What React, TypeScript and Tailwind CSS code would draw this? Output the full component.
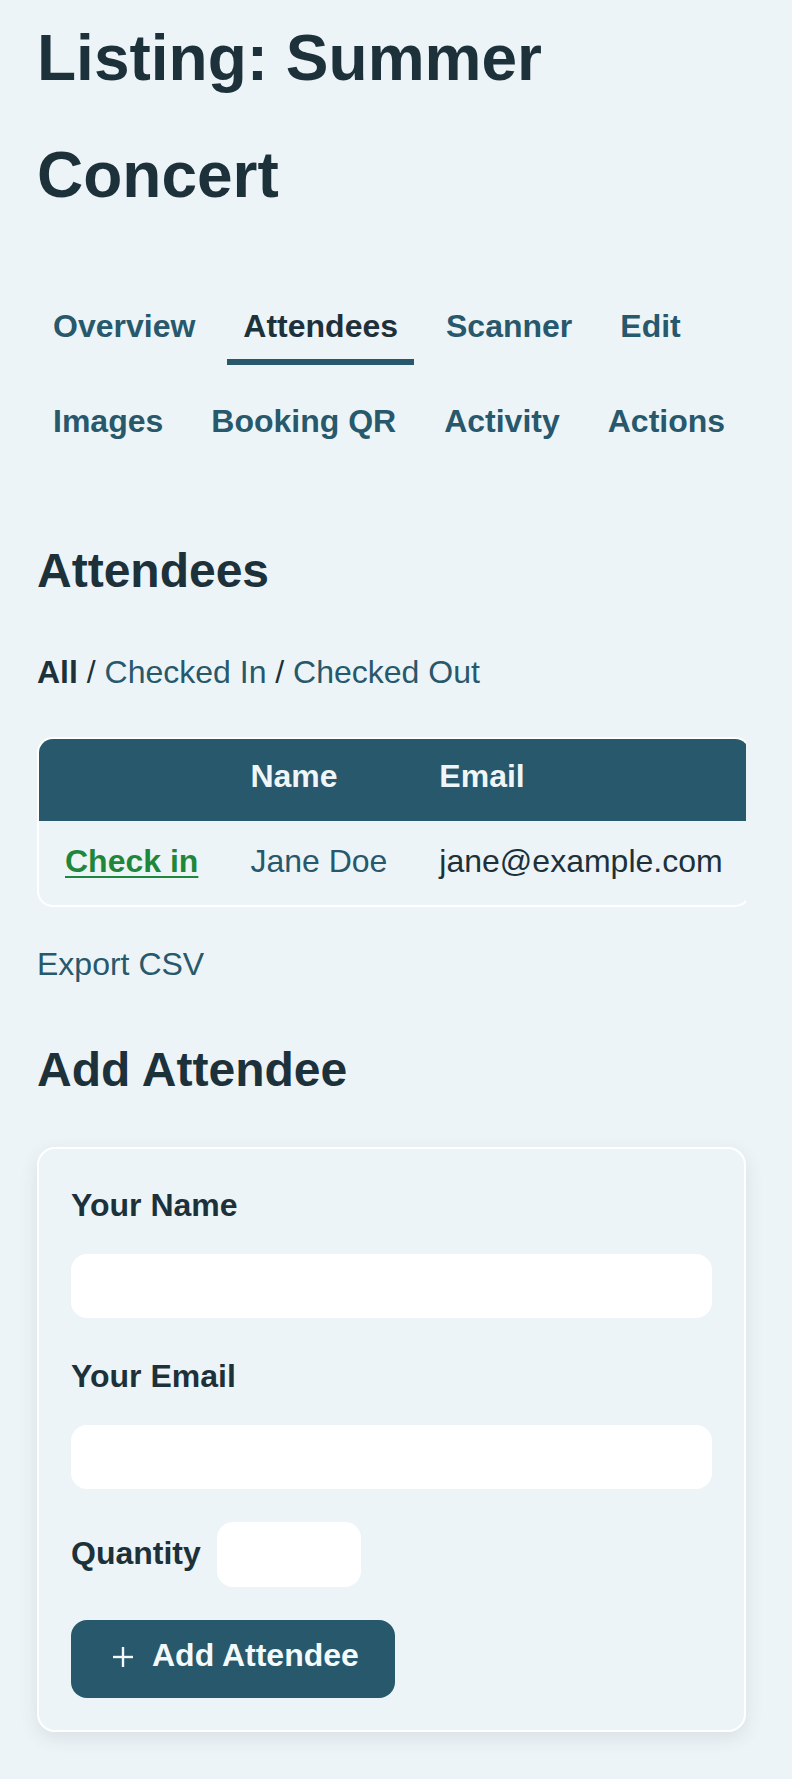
import React from "react";

const tabs = [
    { label: "Overview", active: false },
    { label: "Attendees", active: true },
    { label: "Scanner", active: false },
    { label: "Edit", active: false },
    { label: "Images", active: false },
    { label: "Booking QR", active: false },
    { label: "Activity", active: false },
    { label: "Actions", active: false },
];

const PlusIcon: React.FC = () => (
    <svg width="22" height="22" viewBox="0 0 22 22" className="shrink-0 mt-[15px]">
        <line x1="11" y1="1" x2="11" y2="21" stroke="#f4f9fb" strokeWidth="2.4" />
        <line x1="1" y1="11" x2="21" y2="11" stroke="#f4f9fb" strokeWidth="2.4" />
    </svg>
);

export default function App() {
    return (
        <div
            className="min-h-[1779px] bg-[#edf4f7] pl-[37px] text-[#1d313b] text-[32px] leading-[48px]"
            style={{ fontFamily: '"Liberation Sans", Arial, sans-serif' }}
        >
            <div className="w-[709px]">
                <h1 className="text-[64px] leading-[117px] font-bold">Listing: Summer Concert</h1>

                <nav className="mt-[59px] flex flex-wrap gap-x-[16px] gap-y-[23px]">
                    {tabs.map((t) => (
                        <a
                            key={t.label}
                            className={`px-[16px] pt-[9px] pb-[9px] border-b-[6px] font-bold ${
                                t.active ? "border-[#27586c] text-[#1d313b]" : "border-transparent text-[#27586c]"
                            }`}
                        >
                            {t.label}
                        </a>
                    ))}
                </nav>

                <h2 className="mt-[82px] text-[48px] leading-[58px] font-bold">Attendees</h2>

                <p className="mt-[48px]">
                    <span className="font-bold">All</span> /{" "}
                    <a className="text-[#27586c]">Checked In</a> /{" "}
                    <a className="text-[#27586c]">Checked Out</a>
                </p>

                <div className="mt-[41px] w-[709px] overflow-hidden">
                    <div className="w-max border-2 border-white rounded-[16px] overflow-hidden">
                        <table className="border-collapse">
                            <thead>
                                <tr className="bg-[#27586c] text-[#eef6f9]">
                                    <th className="px-[26px] pt-[13px] pb-[21px] text-left font-bold"></th>
                                    <th className="px-[26px] pt-[13px] pb-[21px] text-left font-bold">Name</th>
                                    <th className="px-[26px] pt-[13px] pb-[21px] text-left font-bold">Email</th>
                                </tr>
                            </thead>
                            <tbody>
                                <tr>
                                    <td className="px-[26px] pt-[16px] pb-[20px]">
                                        <a className="font-bold text-[#1f873b] underline underline-offset-[4px] decoration-2">
                                            Check in
                                        </a>
                                    </td>
                                    <td className="px-[26px] pt-[16px] pb-[20px] text-[#27586c]">Jane Doe</td>
                                    <td className="px-[26px] pt-[16px] pb-[20px]">jane@example.com</td>
                                </tr>
                            </tbody>
                        </table>
                    </div>
                </div>

                <a className="block mt-[33px] text-[#27586c]">Export CSV</a>

                <h2 className="mt-[53px] text-[48px] leading-[58px] font-bold">Add Attendee</h2>

                <form className="mt-[48px] border-2 border-white rounded-[18px] p-[32px] shadow-[0_6px_18px_rgba(30,60,80,0.10)]">
                    <label className="block font-bold mb-[25px]">Your Name</label>
                    <input className="block w-full h-[64px] rounded-[16px] bg-white mb-[34px] outline-none" />

                    <label className="block font-bold mb-[25px]">Your Email</label>
                    <input className="block w-full h-[64px] rounded-[16px] bg-white mb-[33px] outline-none" />

                    <div className="flex items-start gap-[16px] mb-[33px]">
                        <label className="font-bold mt-[7px]">Quantity</label>
                        <input className="w-[144px] h-[65px] rounded-[16px] bg-white outline-none" />
                    </div>

                    <button
                        type="button"
                        className="flex items-start gap-[18px] h-[78px] pt-[11px] pl-[41px] pr-[36px] rounded-[16px] bg-[#27586c] text-[#f4f9fb] font-bold"
                    >
                        <PlusIcon />
                        <span className="leading-[48px]">Add Attendee</span>
                    </button>
                </form>
            </div>
        </div>
    );
}
